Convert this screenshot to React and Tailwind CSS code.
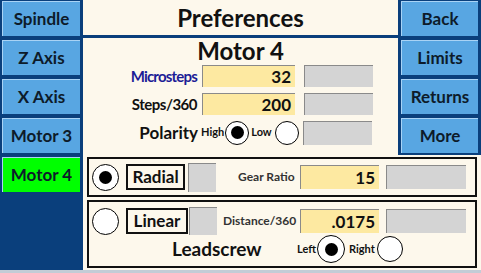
import React from 'react';

const font = { fontFamily: 'Lato, "Open Sans", sans-serif' };

function NavButton({ label, active }) {
  return (
    <div
      className={
        'h-[35px] flex items-center justify-center border-t border-l border-[#a9d3f5] text-[17px] font-bold text-[#0d1b2a] ' +
        (active ? 'bg-[#00ff00] border-[#7dff7d]' : 'bg-[#58a6e2]')
      }
    >
      {label}
    </div>
  );
}

function Radio({ on, size = 'w-[27px] h-[27px]' }) {
  return (
    <div className={'shrink-0 rounded-full border border-black bg-white flex items-center justify-center ' + size}>
      {on && <div className="w-[13px] h-[13px] rounded-full bg-black" />}
    </div>
  );
}

function YellowBox({ value, w = 'w-[93px]', h = 'h-[22px]' }) {
  return (
    <div className={'bg-[#fde9a1] border-t border-l border-[#8a8a8a] flex items-center justify-end pr-[4px] text-[17px] font-bold text-[#111] ' + w + ' ' + h}>
      {value}
    </div>
  );
}

function GrayBox({ w = 'w-[69px]', h = 'h-[22px]' }) {
  return <div className={'bg-[#d4d4d4] border-t border-l border-[#8a8a8a] shrink-0 ' + w + ' ' + h} />;
}

export default function App() {
  return (
    <div className="w-[481px] h-[273px] bg-[#0a3f7c] flex flex-col overflow-hidden" style={font}>
      <div className="h-[270px] flex">
        {/* left column */}
        <div className="w-[83px] pl-[2px] pr-[3px] pt-[1px] flex flex-col gap-[4px]">
          <NavButton label="Spindle" />
          <NavButton label="Z Axis" />
          <NavButton label="X Axis" />
          <NavButton label="Motor 3" />
          <NavButton label="Motor 4" active />
        </div>

        <div className="flex-1 flex flex-col">
          {/* top area */}
          <div className="h-[155px] flex">
            <div className="w-[315px] bg-[#fdf8ec] flex flex-col">
              <div className="h-[35px] flex items-center justify-center text-[24px] font-bold text-[#111]">
                Preferences
              </div>
              <div className="h-[3px] bg-[#0a3f7c]" />
              <div className="h-[26px] flex items-end justify-center text-[24px] font-bold text-[#111] leading-none pb-[1px]">
                Motor 4
              </div>
              <div className="flex flex-col gap-[5px] mt-[1px]">
                <div className="flex items-center">
                  <div className="w-[114px] text-right text-[15px] tracking-[-0.8px] font-bold text-[#1c1c96]">Microsteps</div>
                  <div className="ml-[5px]"><YellowBox value="32" /></div>
                  <div className="ml-[9px]"><GrayBox /></div>
                </div>
                <div className="flex items-center">
                  <div className="w-[114px] text-right text-[15px] tracking-[-0.5px] font-bold text-[#111]">Steps/360</div>
                  <div className="ml-[5px]"><YellowBox value="200" /></div>
                  <div className="ml-[9px]"><GrayBox /></div>
                </div>
                <div className="flex items-center h-[25px]">
                  <div className="w-[115px] text-right text-[17px] font-bold text-[#111]">Polarity</div>
                  <div className="ml-[3px] text-[11px] font-bold text-[#111]">High</div>
                  <div className="ml-[1px]"><Radio on size="w-[24px] h-[24px]" /></div>
                  <div className="ml-[2px] text-[11px] font-bold text-[#111]">Low</div>
                  <div className="ml-[3px]"><Radio size="w-[24px] h-[24px]" /></div>
                  <div className="ml-[4px]"><GrayBox h="h-[24px]" /></div>
                </div>
              </div>
            </div>
            <div className="w-[83px] pl-[3px] pr-[3px] pt-[1px] flex flex-col gap-[4px]">
              <NavButton label="Back" />
              <NavButton label="Limits" />
              <NavButton label="Returns" />
              <NavButton label="More" />
            </div>
          </div>

          {/* bottom area */}
          <div className="flex-1 bg-[#fdf8ec] pl-[4px] pt-[2px] flex flex-col gap-[3px]">
            <div className="w-[390px] h-[40px] border-2 border-[#111] flex items-center pl-[3px]">
              <Radio on />
              <div className="ml-[7px] w-[59px] h-[26px] border-2 border-[#111] flex items-center justify-center text-[17px] font-bold text-[#111]">
                Radial
              </div>
              <div className="ml-[3px]"><GrayBox w="w-[28px]" h="h-[29px]" /></div>
              <div className="ml-[22px] w-[59px] text-[12px] font-bold text-[#333] whitespace-nowrap">Gear Ratio</div>
              <div className="ml-[3px]"><YellowBox value="15" w="w-[79px]" h="h-[24px]" /></div>
              <div className="ml-[7px]"><GrayBox w="w-[80px]" h="h-[24px]" /></div>
            </div>
            <div className="w-[390px] h-[68px] border-2 border-[#111] flex flex-col pl-[3px] pt-[5px]">
              <div className="flex items-center">
                <Radio />
                <div className="ml-[7px] w-[62px] h-[26px] border-2 border-[#111] flex items-center justify-center text-[17px] font-bold text-[#111]">
                  Linear
                </div>
                <div className="ml-[1px]"><GrayBox w="w-[28px]" h="h-[28px]" /></div>
                <div className="ml-[6px] w-[74px] text-[12px] font-bold text-[#333] whitespace-nowrap">Distance/360</div>
                <div className="ml-[3px]"><YellowBox value=".0175" w="w-[79px]" h="h-[24px]" /></div>
                <div className="ml-[7px]"><GrayBox w="w-[80px]" h="h-[24px]" /></div>
              </div>
              <div className="flex items-center">
                <div className="ml-[80px] w-[88px] text-[19px] font-bold text-[#111]">Leadscrew</div>
                <div className="ml-[37px] text-[11px] font-bold text-[#111]">Left</div>
                <div className="ml-[1px]"><Radio on size="w-[28px] h-[28px]" /></div>
                <div className="ml-[4px] text-[11px] font-bold text-[#111]">Right</div>
                <div className="ml-[2px]"><Radio size="w-[26px] h-[26px]" /></div>
              </div>
            </div>
          </div>
        </div>
      </div>
      <div className="h-[3px] bg-[#c3ccd6]" />
    </div>
  );
}
